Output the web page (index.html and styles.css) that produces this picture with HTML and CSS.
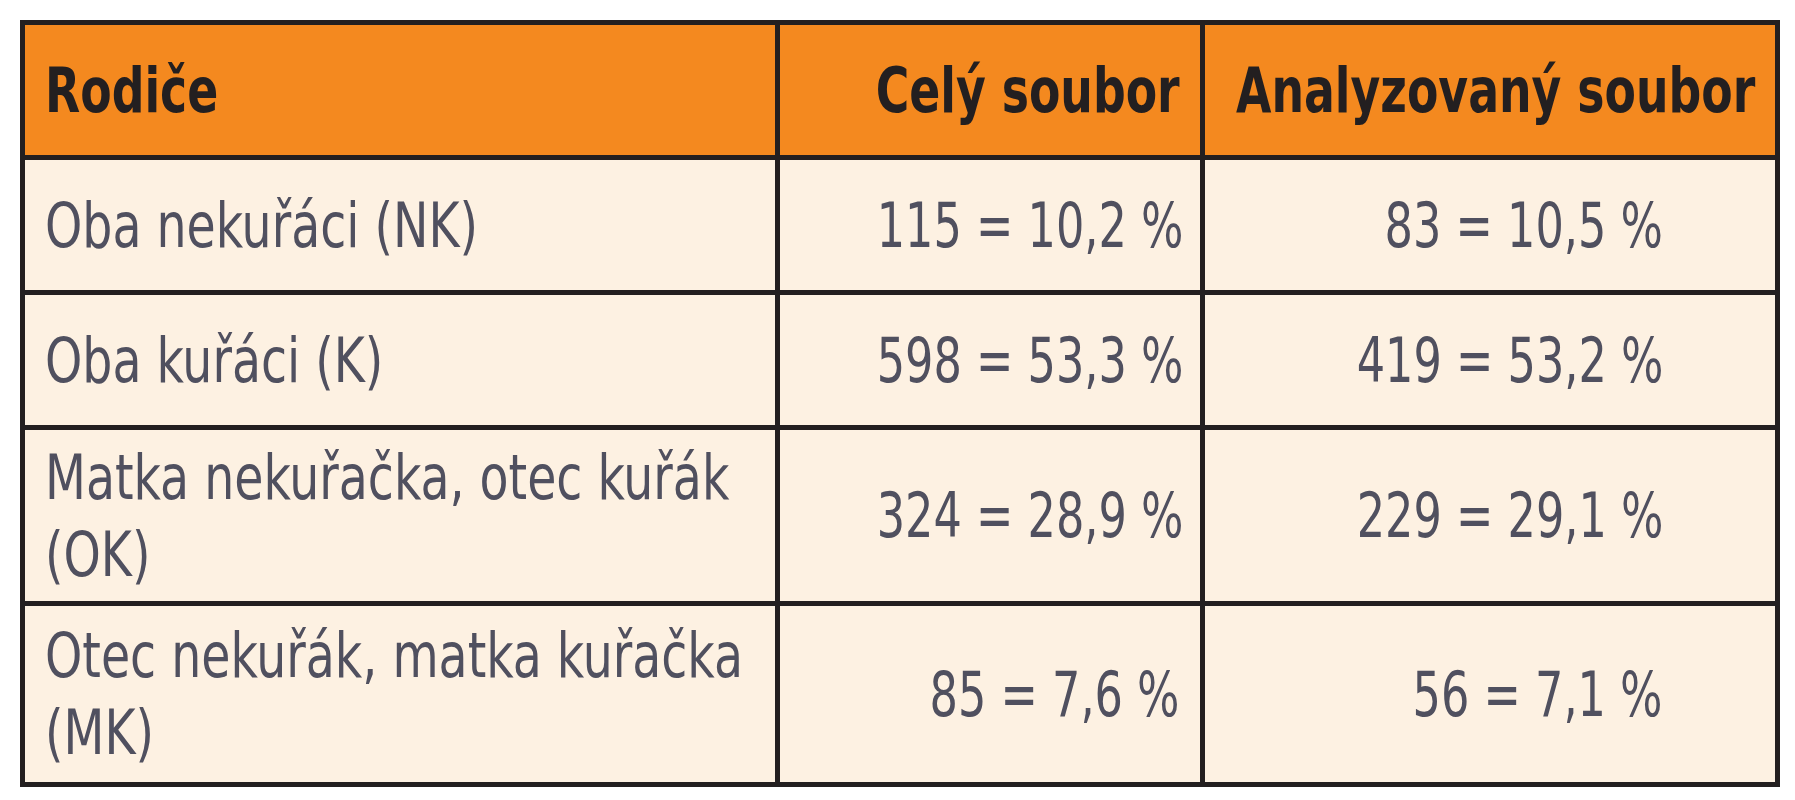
FILE: index.html
```html
<!DOCTYPE html>
<html lang="cs">
<head>
<meta charset="utf-8">
<title>Rodiče</title>
<link rel="stylesheet" href="styles.css">
</head>
<body>
<table class="data">
  <colgroup>
    <col class="w1">
    <col class="w2">
    <col class="w3">
  </colgroup>
  <thead>
    <tr class="head">
      <th class="c1"><span class="t">Rodiče</span></th>
      <th class="c2"><span class="t">Celý soubor</span></th>
      <th class="c3"><span class="t">Analyzovaný soubor</span></th>
    </tr>
  </thead>
  <tbody>
    <tr class="r1">
      <td class="c1"><span class="t">Oba nekuřáci (NK)</span></td>
      <td class="c2"><span class="t">115 = 10,2 %</span></td>
      <td class="c3"><span class="t">83 = 10,5 %</span></td>
    </tr>
    <tr class="r1">
      <td class="c1"><span class="t">Oba kuřáci (K)</span></td>
      <td class="c2"><span class="t">598 = 53,3 %</span></td>
      <td class="c3"><span class="t">419 = 53,2 %</span></td>
    </tr>
    <tr class="r2">
      <td class="c1"><span class="t">Matka nekuřačka, otec kuřák<br>(OK)</span></td>
      <td class="c2"><span class="t">324 = 28,9 %</span></td>
      <td class="c3"><span class="t">229 = 29,1 %</span></td>
    </tr>
    <tr class="r3">
      <td class="c1"><span class="t">Otec nekuřák, matka kuřačka<br>(MK)</span></td>
      <td class="c2"><span class="t">85 = 7,6 %</span></td>
      <td class="c3"><span class="t">56 = 7,1 %</span></td>
    </tr>
  </tbody>
</table>
</body>
</html>
```
FILE: styles.css
```css
html, body {
  margin: 0;
  padding: 0;
  background: #ffffff;
}

body {
  padding: 20px 0 0 20px;
}

.data {
  border-collapse: collapse;
  table-layout: fixed;
  width: 1760px;
  font-family: "DejaVu Sans Condensed", "DejaVu Sans", sans-serif;
  font-size: 62px;
  line-height: 77px;
  color: #50505f;
  background: #fdf1e2;
  border: 5px solid #231f20;
}

.w1 { width: 755px; }
.w2 { width: 425px; }
.w3 { width: 575px; }

.data th,
.data td {
  border: 5px solid #231f20;
  padding: 0 20px;
  vertical-align: middle;
  white-space: nowrap;
  overflow: visible;
}

.t {
  display: inline-block;
  transform: scaleX(0.85);
}

.data th {
  background: #f4891f;
  color: #231f20;
  font-weight: bold;
  height: 130px;
}

.data th .t {
  transform: scaleX(0.82);
}

.data .c1 {
  text-align: left;
}

.data .c1 .t {
  transform-origin: left center;
}

.data .c2,
.data .c3 {
  text-align: right;
}

.data .c2 .t,
.data .c3 .t {
  transform-origin: right center;
}

.data td.c2 .t,
.data td.c3 .t {
  transform: scaleX(0.8);
}

.data td.c3 {
  padding-right: 112px;
}

.data th.c3 {
  text-align: left;
  padding-left: 31px;
  padding-right: 0;
}

.data th.c3 .t {
  transform-origin: left center;
}

.r1 td {
  height: 130px;
}

.r2 td {
  height: 171px;
}

.r3 td {
  height: 176px;
}
```
